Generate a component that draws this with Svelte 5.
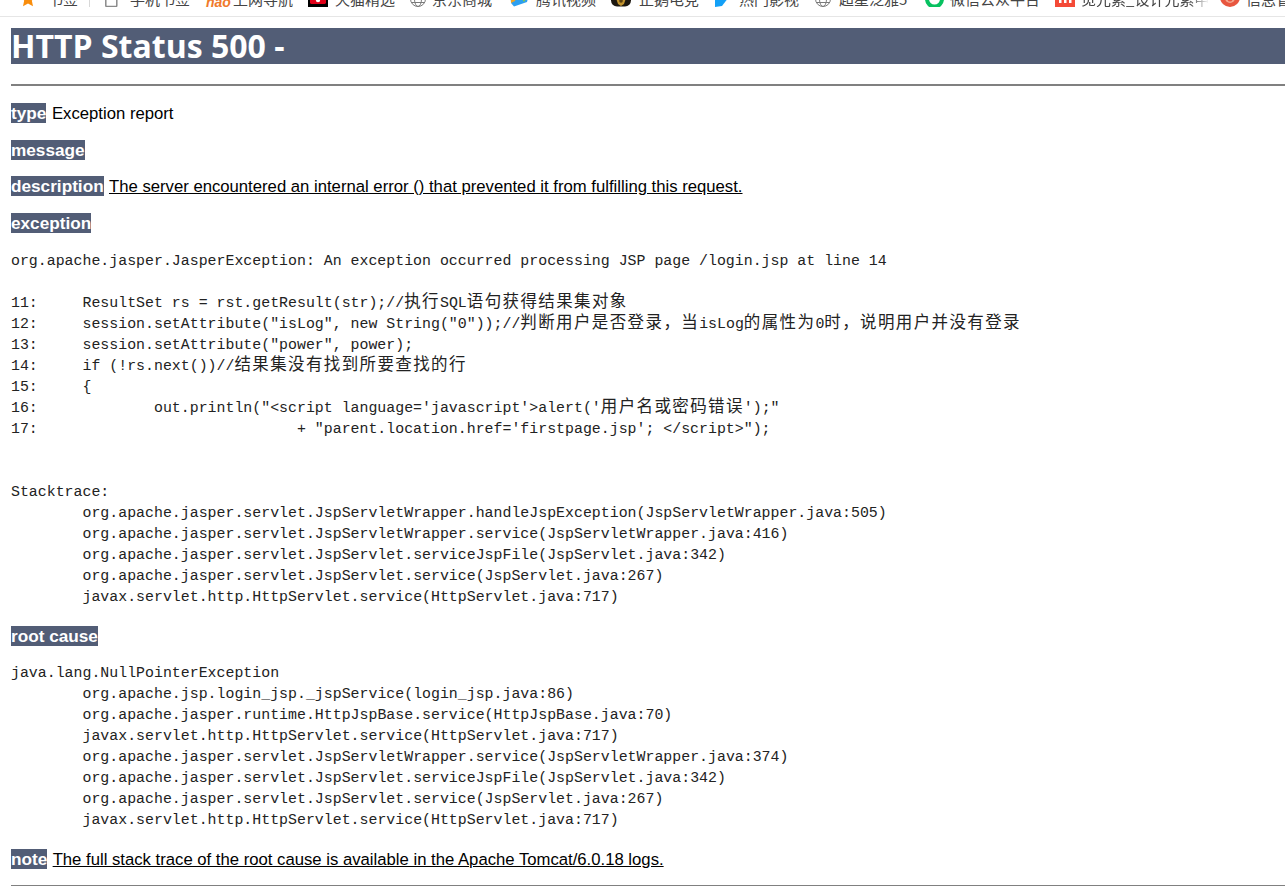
<script>
  const bookmarks = [
    { label: '书签', icon: 'star', lo: 28, w: 69 },
    { label: '', icon: 'sep', lo: 0, w: 16 },
    { label: '手机书签', icon: 'page', lo: 25, w: 101 },
    { label: '上网导航', icon: 'hao', lo: 27, w: 102 },
    { label: '天猫精选', icon: 'tmall', lo: 27, w: 102 },
    { label: '京东商城', icon: 'globe', lo: 22, w: 100 },
    { label: '腾讯视频', icon: 'tx', lo: 26, w: 101 },
    { label: '正鹅电竞', icon: 'game', lo: 28, w: 104 },
    { label: '热门影视', icon: 'play', lo: 24, w: 100 },
    { label: '超星泛雅5', icon: 'globe', lo: 24, w: 109 },
    { label: '微信公众平台', icon: 'wx', lo: 26, w: 131 },
    { label: '觅元素_设计元素中', icon: 'mi', lo: 26, w: 165, fade: true },
    { label: '信息管理', icon: 'red', lo: 26, w: 65 }
  ];
  const src = [
    '11:     ResultSet rs = rst.getResult(str);//执行SQL语句获得结果集对象',
    '12:     session.setAttribute("isLog", new String("0"));//判断用户是否登录，当isLog的属性为0时，说明用户并没有登录',
    '13:     session.setAttribute("power", power);',
    '14:     if (!rs.next())//结果集没有找到所要查找的行',
    '15:     {',
    '16:             out.println("<script language=\'javascript\'>alert(\'用户名或密码错误\');"',
    '17:                             + "parent.location.href=\'firstpage.jsp\'; </scr' + 'ipt>");'
  ];
  const trace1 = ['org.apache.jasper.servlet.JspServletWrapper.handleJspException(JspServletWrapper.java:505)','org.apache.jasper.servlet.JspServletWrapper.service(JspServletWrapper.java:416)','org.apache.jasper.servlet.JspServlet.serviceJspFile(JspServlet.java:342)','org.apache.jasper.servlet.JspServlet.service(JspServlet.java:267)','javax.servlet.http.HttpServlet.service(HttpServlet.java:717)'];
  const trace2 = ['org.apache.jsp.login_jsp._jspService(login_jsp.java:86)','org.apache.jasper.runtime.HttpJspBase.service(HttpJspBase.java:70)','javax.servlet.http.HttpServlet.service(HttpServlet.java:717)','org.apache.jasper.servlet.JspServletWrapper.service(JspServletWrapper.java:374)','org.apache.jasper.servlet.JspServlet.serviceJspFile(JspServlet.java:342)','org.apache.jasper.servlet.JspServlet.service(JspServlet.java:267)','javax.servlet.http.HttpServlet.service(HttpServlet.java:717)'];
  const exc = 'org.apache.jasper.JasperException: An exception occurred processing JSP page /login.jsp at line 14\n\n' + src.join('\n') + '\n\n\nStacktrace:\n' + trace1.map(t => '\t' + t).join('\n');
  const root = 'java.lang.NullPointerException\n' + trace2.map(t => '\t' + t).join('\n');
  const parts = (s) => s.split(/([\u3000-\u9fff\uff00-\uffef]+)/).map((text, i) => ({ text, cjk: i % 2 === 1 }));
</script>

<div class="bar">
  <div class="items">
    {#each bookmarks as b}
      <div class="bm" style="width:{b.w}px">
        {#if b.icon === 'sep'}
          <span class="sep"></span>
        {:else}
          <span class="ic">
            {#if b.icon === 'star'}
              <svg viewBox="0 0 20 16" width="20" height="16"><path d="M8 0l2.400 5.200 5.600.6-4.200 3.800 1.200 5.600-5-2.800-5 2.800 1.200-5.600L.8 5.800l5.600-.6z" fill="#f98d0c"/></svg>
            {:else if b.icon === 'page'}
              <svg viewBox="0 0 20 16" width="20" height="16"><rect x="0.800" y="2" width="11" height="13.500" rx="1" fill="none" stroke="#8a8a8a" stroke-width="1.500"/></svg>
            {:else if b.icon === 'hao'}
              <span class="hao">hao</span>
            {:else if b.icon === 'tmall'}
              <svg viewBox="0 0 20 16" width="20" height="16"><rect width="20" height="16" fill="#000"/><path d="M2 0h16v12a2 2 0 0 1-2 1H4a2 2 0 0 1-2-1z" fill="#e00018"/><circle cx="10" cy="9" r="2.200" fill="#fff"/></svg>
            {:else if b.icon === 'globe'}
              <svg viewBox="0 0 20 16" width="20" height="16" fill="none" stroke="#7a7a7a"><circle cx="8" cy="8" r="7.500"/><ellipse cx="8" cy="8" rx="3.500" ry="7.500"/><path d="M.5 8h15M1.500 11.500h13"/></svg>
            {:else if b.icon === 'tx'}
              <svg viewBox="0 0 20 16" width="20" height="16"><path d="M0 0h20l-3 11L4 15.500 1 12z" fill="#2c9ff0"/><path d="M7 0h13l-6 11z" fill="#8ccc3a"/><path d="M1 0h7L5 10 1 12z" fill="#f5a623"/></svg>
            {:else if b.icon === 'game'}
              <svg viewBox="0 0 20 16" width="20" height="16"><rect x="0" y="0" width="20" height="15.500" rx="6" fill="#1d1810"/><path d="M5 7h10l-2 6-3 2-3-2z" fill="#c2942f"/><circle cx="10" cy="10" r="1.800" fill="#5a3f10"/></svg>
            {:else if b.icon === 'play'}
              <svg viewBox="0 0 20 16" width="20" height="16"><path d="M0 2h17l-10 13-7 1z" fill="#12a0f7"/></svg>
            {:else if b.icon === 'wx'}
              <svg viewBox="0 0 20 16" width="20" height="16" fill="none"><path d="M18 9A7.500 7.500 0 0 1 3 9" transform="translate(0 -1)" stroke="#07c160" stroke-width="4"/></svg>
            {:else if b.icon === 'mi'}
              <svg viewBox="0 0 20 16" width="20" height="16"><rect width="20" height="16" fill="#f44a37"/><path d="M4 0h2.500v12H4zM9 0h2.500v12H9zM14 0h2.500v12H14z" fill="#fff"/></svg>
            {:else}
              <svg viewBox="0 0 20 16" width="20" height="16"><circle cx="10" cy="6" r="10" fill="#e8563f"/><circle cx="10" cy="7" r="5" fill="#f4a78f"/><circle cx="10" cy="8" r="2.500" fill="#e8563f"/></svg>
            {/if}
          </span>
          <span class="lb" class:fade={b.fade} style="left:{b.lo}px">{b.label}</span>
        {/if}
      </div>
    {/each}
  </div>
</div>

<main>
  <h1>HTTP Status 500 - </h1>
  <div class="rule thick"></div>
  <p><b>type</b> Exception report</p>
  <p><b>message</b> <u></u></p>
  <p><b>description</b> <u>The server encountered an internal error () that prevented it from fulfilling this request.</u></p>
  <p><b>exception</b></p>
  <pre>{#each parts(exc) as s}{#if s.cjk}<span class="cjk">{s.text}</span>{:else}{s.text}{/if}{/each}</pre>
  <p><b>root cause</b></p>
  <pre class="root">{root}</pre>
  <p><b>note</b> <u>The full stack trace of the root cause is available in the Apache Tomcat/6.0.18 logs.</u></p>
  <div class="rule thin"></div>
</main>

<style>
  :global(body) { margin: 0; background: #fff; overflow: hidden; }
  .bar { height: 16px; border-bottom: 1px solid #e6e6e6; overflow: hidden; background: #fff; }
  .items { display: flex; padding-left: 20px; margin-top: -9px; height: 25px; align-items: flex-start; white-space: nowrap; }
  .bm { position: relative; flex: none; height: 16px; font: 15px/16px "Noto Sans CJK SC", sans-serif; color: #444; }
  .ic { display: block; width: 20px; height: 16px; line-height: 0; }
  .lb { position: absolute; top: 0; }
  .fade { width: 128px; overflow: hidden; -webkit-mask-image: linear-gradient(90deg, #000 85%, transparent); mask-image: linear-gradient(90deg, #000 85%, transparent); }
  .sep { display: block; width: 1px; height: 16px; background: #d8d8d8; }
  .hao { display: block; font: italic 700 14px/22px "Liberation Sans", sans-serif; color: #f07a2c; }
  main { padding-left: 11px; padding-top: 11px; color: #000; font: 16.7px/20px "Liberation Sans", sans-serif; }
  h1 { margin: 0; height: 36px; background: #525d76; color: #fff; font: 700 32px/36px "Open Sans", sans-serif; }
  .rule { background: #808080; }
  .thick { height: 2px; margin-top: 20px; }
  .thin { height: 1px; margin-top: 17px; }
  p { margin: 16.67px 0 0; line-height: 22px; height: 20px; white-space: nowrap; }
  .thick + p { margin-top: 16px; }
  pre + p { margin-top: 17px; }
  b { background: #525d76; color: #fff; font-weight: 700; font-size: 17.2px; margin-right: 1px; }
  pre { margin: 19px 0 0; font: 14.9px/21px "Liberation Mono", "Noto Sans CJK SC", monospace; tab-size: 8; color: #222; }
  pre.root { margin-top: 18px; }
  .cjk { font: 16.5px/0 "Noto Sans CJK SC", sans-serif; letter-spacing: 1.38px; }
</style>
